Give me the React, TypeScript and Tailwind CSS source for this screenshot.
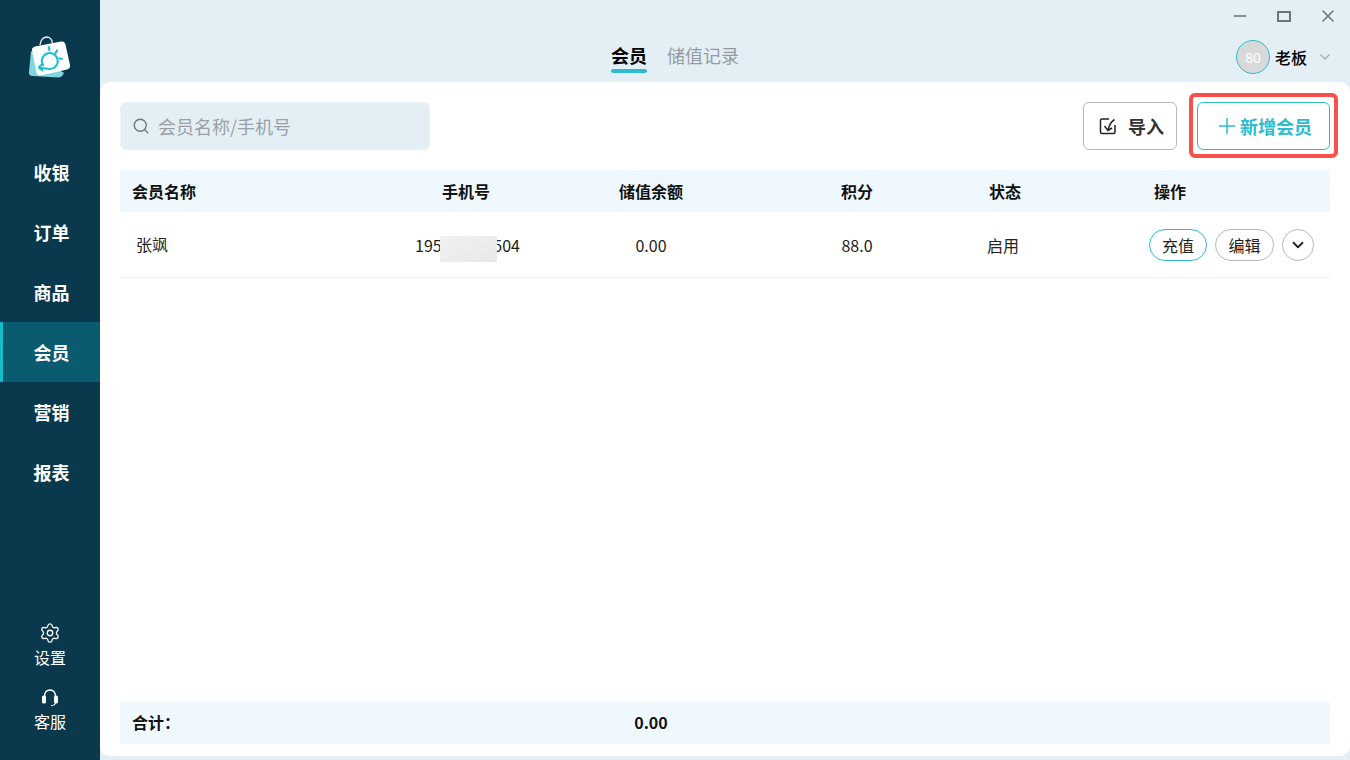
import { ChevronDown, Minus, Plus, Search, Settings, X } from "lucide-react"

const navItems = ["收银", "订单", "商品", "会员", "营销", "报表"]
const columns = "grid grid-cols-[252px_188px_182px_230px_66px_262px_30px] items-center"

const Logo = () => (
  <svg width="44" height="46" viewBox="0 0 44 46" fill="none">
    <path d="M3 15 L1 36 Q0.5 40 5 40 L30 41.5 Q34 41.5 36 37 Z" fill="#7fd6e2" />
    <path d="M12 9 Q13 1.5 18.5 1 Q23.5 1 24.5 7" stroke="#dfeef3" strokeWidth="1.3" />
    <path
      d="M7 10.5 L33 5.5 Q36.5 5 37.5 8.5 L42 29 Q42.5 32.5 39 33.5 L13 39.5 Q9.5 40 8.5 36.5 L4 14.5 Q3.5 11.5 7 10.5 Z"
      fill="#fff"
    />
    <path d="M15.5 30 A8 8 0 1 1 21 33 L10.5 31.5 M10.5 31.5 L15 27.5 M10.5 31.5 L15 35" stroke="#1fbcd2" strokeWidth="2" />
    <path d="M21 11 L21.3 14 M29 14.5 L27.5 17 M34 23 L31.5 22.3" stroke="#1fbcd2" strokeWidth="2.2" strokeLinecap="round" />
  </svg>
)

const Headset = () => (
  <svg width="18" height="18" viewBox="0 0 18 18" fill="none">
    <path d="M3.5 8 Q3.5 1 9 1 Q14.5 1 14.5 8" stroke="#fff" strokeWidth="1.3" />
    <rect x="1" y="6.5" width="4" height="8" rx="1.6" fill="#fff" />
    <rect x="13" y="6.5" width="4" height="8" rx="1.6" fill="#fff" />
    <path d="M14.5 14 Q14 16.5 10 16.5" stroke="#fff" strokeWidth="1.2" />
  </svg>
)

const ImportIcon = () => (
  <svg width="18" height="18" viewBox="0 0 18 18" fill="none" stroke="#222" strokeWidth="1.5">
    <path d="M10 2 H3 Q1.5 2 1.5 3.5 V15 Q1.5 16.5 3 16.5 H14.5 Q16 16.5 16 15 V8" />
    <path d="M15.5 2.5 Q10.5 5.5 9 13.5 M5.5 9 L9 13.5 L13 11" />
  </svg>
)

export default function App() {
  return (
    <div className="flex h-screen w-full overflow-hidden bg-[#e4eff5] font-['Noto_Sans_CJK_SC',sans-serif] text-[#222]">
      {/* Sidebar */}
      <aside className="flex w-[100px] shrink-0 flex-col bg-[#0a394d] text-white">
        <div className="flex h-[142px] justify-center pt-[36px]">
          <div className="h-[46px]">
            <Logo />
          </div>
        </div>
        <nav className="flex flex-col">
          {navItems.map((item) => (
            <a
              key={item}
              className={
                item === "会员"
                  ? "flex h-[60px] items-center justify-center border-l-[3px] border-[#14bcc8] bg-[#0a5a70] text-[18px] leading-none font-bold"
                  : "flex h-[60px] items-center justify-center pl-[3px] text-[18px] leading-none font-bold"
              }
            >
              {item}
            </a>
          ))}
        </nav>
        <div className="mt-auto flex flex-col items-center pb-[31px] text-[16px] leading-none">
          <Settings size={22} strokeWidth={1.4} />
          <span className="mt-[5px]">设置</span>
          <div className="mt-[24px]">
            <Headset />
          </div>
          <span className="mt-[6px]">客服</span>
        </div>
      </aside>

      <main className="flex min-w-0 flex-1 flex-col">
        {/* Title bar and tabs */}
        <header className="relative h-[82px] shrink-0">
          <div className="flex justify-center pt-[42px] pr-[100px]">
            <div className="flex gap-5 text-[18px] leading-[26px]">
              <div className="flex flex-col items-center">
                <span className="font-bold text-black">会员</span>
                <span className="mt-[1px] h-1 w-9 rounded-sm bg-[#2bbcd0]" />
              </div>
              <span className="text-[#949b9f]">储值记录</span>
            </div>
          </div>
          <div className="absolute top-[6px] right-[12px] flex items-center gap-[27px] text-[#6b7378]">
            <Minus size={20} strokeWidth={1.8} />
            <svg width="14" height="11" viewBox="0 0 14 11" fill="none" stroke="currentColor" strokeWidth="2">
              <rect x="1" y="1" width="12" height="9" />
            </svg>
            <X size={20} strokeWidth={1.8} />
          </div>
          <div className="absolute top-[40px] right-[17px] flex items-center">
            <div className="flex h-[34px] w-[34px] items-center justify-center rounded-full border border-[#2bbcd0] bg-[#d9d9d9] text-[14px] text-white">
              80
            </div>
            <span className="ml-[5px] text-[16px] font-medium text-black">老板</span>
            <ChevronDown size={16} className="ml-[10px] text-[#a3abaf]" />
          </div>
        </header>

        {/* Content panel */}
        <section className="relative mb-1 flex flex-1 flex-col rounded-[10px] bg-white px-5 pt-5 pb-3">
          <div className="flex items-center">
            <label className="flex h-12 w-[310px] items-center gap-[8px] rounded-md border border-[#eaf3f8] bg-[#e4eff5] pl-[11px]">
              <Search size={18} strokeWidth={1.8} className="text-[#6f777c]" />
              <input
                placeholder="会员名称/手机号"
                className="min-w-0 flex-1 bg-transparent text-[18px] outline-none placeholder:text-[#9aa0a5]"
              />
            </label>
            <button className="ml-auto flex h-12 w-[94px] items-center gap-[11px] rounded-md border border-[#b9b9b9] pl-[15px] text-[18px] font-bold text-[#333]">
              <ImportIcon />
              导入
            </button>
            <button className="ml-5 flex h-12 w-[133px] items-center rounded-md border border-[#2bbcd0] pl-[16px] text-[18px] font-bold text-[#2bbcd0]">
              <Plus size={26} strokeWidth={1.4} />
              新增会员
            </button>
          </div>
          {/* highlight around the add button */}
          <div className="pointer-events-none absolute top-[11px] right-[12px] h-[65px] w-[149px] rounded-md border-[4px] border-[#f8504b]" />

          {/* Table */}
          <div className={`${columns} mt-5 h-[42px] bg-[#eff8fe] text-[16px] font-bold text-[#111]`}>
            <div className="pl-3">会员名称</div>
            <div className="text-center">手机号</div>
            <div className="text-center">储值余额</div>
            <div className="text-center">积分</div>
            <div className="text-center">状态</div>
            <div className="pl-[2px] text-center">操作</div>
          </div>
          <div className={`${columns} h-[66px] border-b border-[#f0f0f0] text-[16px] text-[#222]`}>
            <div className="mt-[-2px] pl-4">张飒</div>
            <div className="relative pl-[3px] text-center">
              195 <span className="invisible">00000</span> 504
              <span className="absolute top-[3px] left-[68px] h-[26px] w-[57px] bg-gradient-to-br from-[#f0f1f1] to-[#e8e8e8]" />
            </div>
            <div className="text-center">0.00</div>
            <div className="text-center">88.0</div>
            <div className="pr-1 text-center">启用</div>
            <div className="col-span-2 flex items-center justify-end gap-2 pr-4">
              <button className="h-8 w-[58px] rounded-full border border-[#2bbcd0] text-[16px]">充值</button>
              <button className="h-8 w-[59px] rounded-full border border-[#b9b9b9] text-[16px]">编辑</button>
              <button className="flex h-8 w-8 items-center justify-center rounded-full border border-[#b9b9b9]">
                <ChevronDown size={18} strokeWidth={2.4} />
              </button>
            </div>
          </div>

          <div className={`${columns} mt-auto h-[42px] bg-[#eff8fe] pb-[2px] text-[16px] font-bold text-[#111]`}>
            <div className="pl-3">合计：</div>
            <div />
            <div className="text-center">0.00</div>
          </div>
        </section>
      </main>
    </div>
  )
}
